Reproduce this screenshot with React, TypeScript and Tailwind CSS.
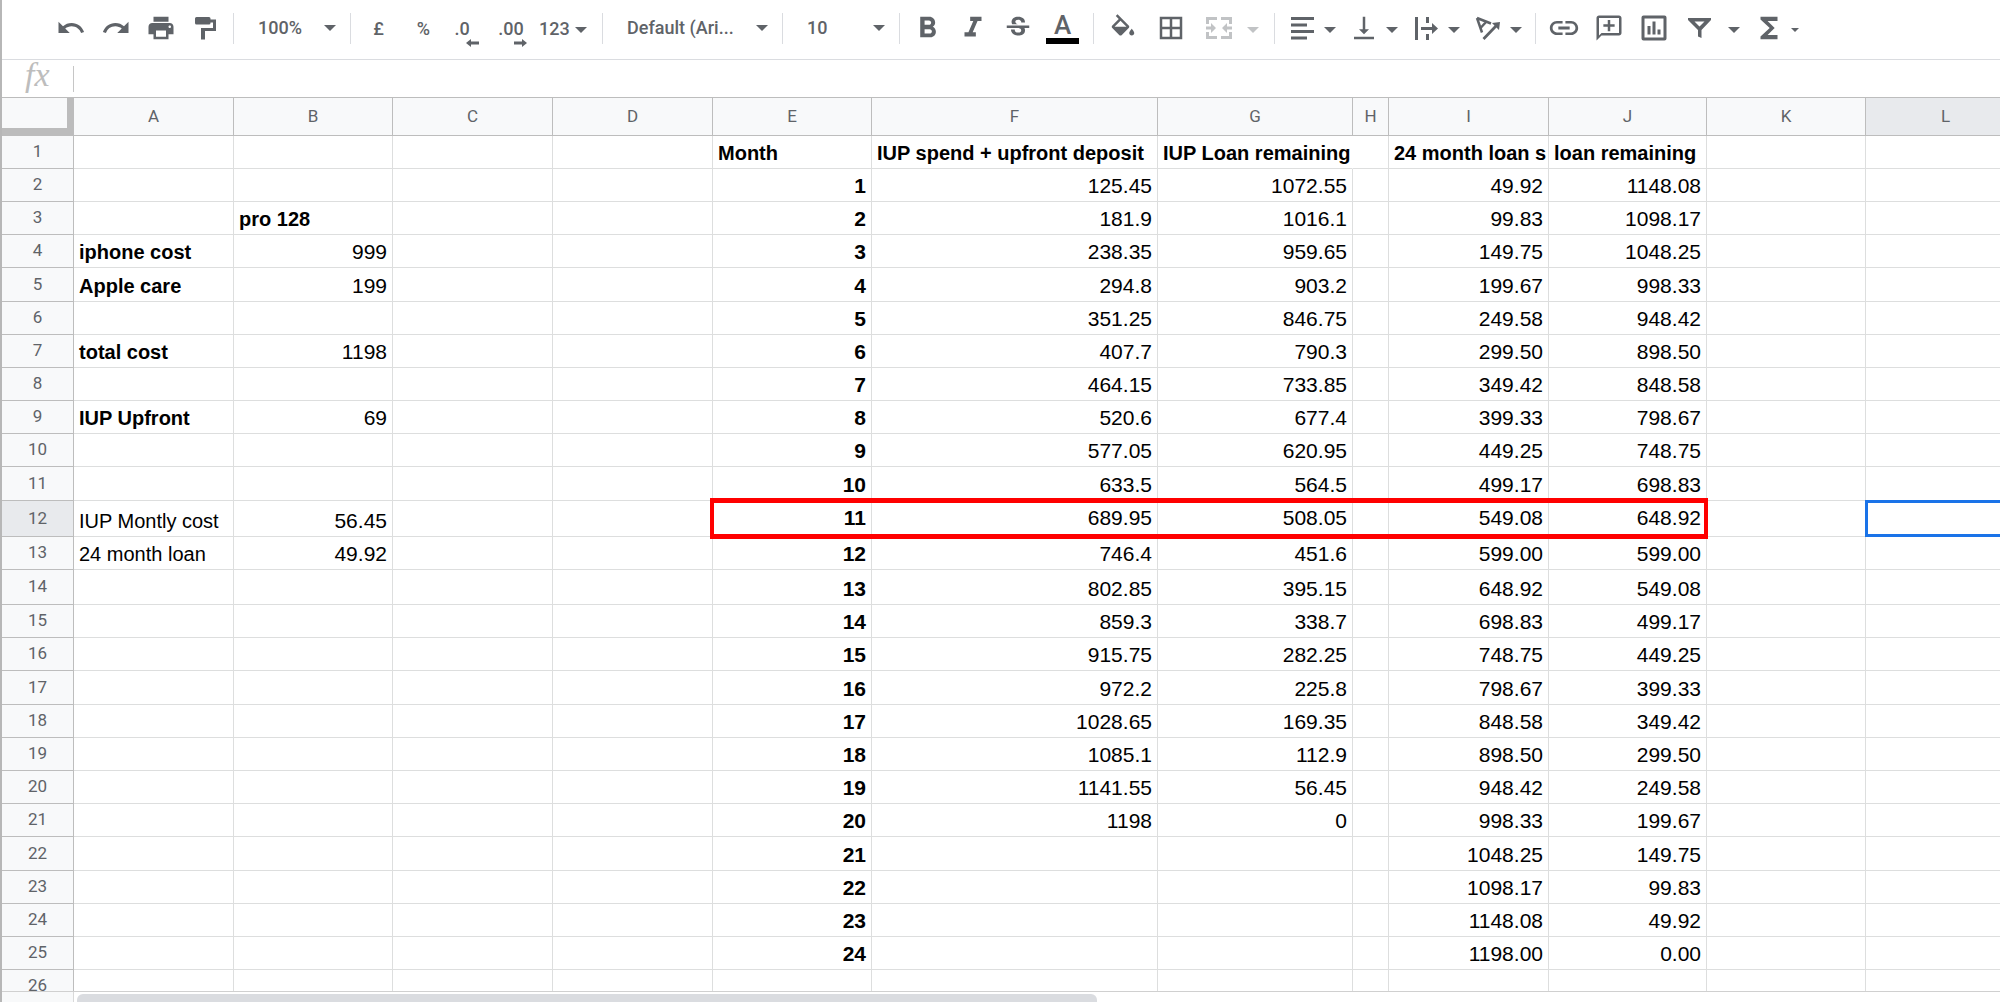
import type { ReactNode } from 'react';
import { clsx } from 'clsx';
import {
    MdBorderAll,
    MdFormatBold,
    MdFormatItalic,
    MdFunctions,
    MdLink,
    MdPrint,
    MdRedo,
    MdStrikethroughS,
    MdUndo,
    MdVerticalAlignBottom,
} from 'react-icons/md';

type Row = { height?: string; cells: Record<string, string> };

const columns = [
    { name: 'A', width: 'w-[160px]' },
    { name: 'B', width: 'w-[159px]' },
    { name: 'C', width: 'w-[160px]' },
    { name: 'D', width: 'w-[160px]' },
    { name: 'E', width: 'w-[159px]' },
    { name: 'F', width: 'w-[286px]' },
    { name: 'G', width: 'w-[195px]' },
    { name: 'H', width: 'w-[36px]' },
    { name: 'I', width: 'w-[160px]' },
    { name: 'J', width: 'w-[158px]' },
    { name: 'K', width: 'w-[159px]' },
    { name: 'L', width: 'w-[160px]' },
];

const rows: Row[] = [
    { cells: { E: 'Month', F: 'IUP spend + upfront deposit', G: 'IUP Loan remaining', I: '24 month loan s', J: 'loan remaining' } },
    { cells: { E: '1', F: '125.45', G: '1072.55', I: '49.92', J: '1148.08' } },
    { cells: { B: 'pro 128', E: '2', F: '181.9', G: '1016.1', I: '99.83', J: '1098.17' } },
    { cells: { A: 'iphone cost', B: '999', E: '3', F: '238.35', G: '959.65', I: '149.75', J: '1048.25' } },
    { height: 'h-[34px]', cells: { A: 'Apple care', B: '199', E: '4', F: '294.8', G: '903.2', I: '199.67', J: '998.33' } },
    { cells: { E: '5', F: '351.25', G: '846.75', I: '249.58', J: '948.42' } },
    { cells: { A: 'total cost', B: '1198', E: '6', F: '407.7', G: '790.3', I: '299.50', J: '898.50' } },
    { cells: { E: '7', F: '464.15', G: '733.85', I: '349.42', J: '848.58' } },
    { cells: { A: 'IUP Upfront', B: '69', E: '8', F: '520.6', G: '677.4', I: '399.33', J: '798.67' } },
    { cells: { E: '9', F: '577.05', G: '620.95', I: '449.25', J: '748.75' } },
    { height: 'h-[34px]', cells: { E: '10', F: '633.5', G: '564.5', I: '499.17', J: '698.83' } },
    { height: 'h-[36px]', cells: { A: 'IUP Montly cost', B: '56.45', E: '11', F: '689.95', G: '508.05', I: '549.08', J: '648.92' } },
    { cells: { A: '24 month loan', B: '49.92', E: '12', F: '746.4', G: '451.6', I: '599.00', J: '599.00' } },
    { height: 'h-[35px]', cells: { E: '13', F: '802.85', G: '395.15', I: '648.92', J: '549.08' } },
    { cells: { E: '14', F: '859.3', G: '338.7', I: '698.83', J: '499.17' } },
    { cells: { E: '15', F: '915.75', G: '282.25', I: '748.75', J: '449.25' } },
    { height: 'h-[34px]', cells: { E: '16', F: '972.2', G: '225.8', I: '798.67', J: '399.33' } },
    { cells: { E: '17', F: '1028.65', G: '169.35', I: '848.58', J: '349.42' } },
    { cells: { E: '18', F: '1085.1', G: '112.9', I: '898.50', J: '299.50' } },
    { cells: { E: '19', F: '1141.55', G: '56.45', I: '948.42', J: '249.58' } },
    { cells: { E: '20', F: '1198', G: '0', I: '998.33', J: '199.67' } },
    { height: 'h-[34px]', cells: { E: '21', I: '1048.25', J: '149.75' } },
    { cells: { E: '22', I: '1098.17', J: '99.83' } },
    { cells: { E: '23', I: '1148.08', J: '49.92' } },
    { cells: { E: '24', I: '1198.00', J: '0.00' } },
    { cells: {} },
];

const ACTIVE_ROW = 12;
const ACTIVE_COL = 'L';
const BOXED = ['E', 'F', 'G', 'H', 'I', 'J'];

const isNumber = (text: string) => /^[\d.]+$/.test(text);

const isBold = (row: number, col: string) =>
    row === 1 || col === 'E' || (col === 'A' && row < 12) || (col === 'B' && row === 3);

const Svg = ({ children, viewBox = '0 0 30 30' }: { children: ReactNode; viewBox?: string }) => (
    <svg viewBox={viewBox} fill="currentColor" className="size-[30px] shrink-0" aria-hidden="true">
        {children}
    </svg>
);

const Caret = ({ className }: { className?: string }) => (
    <svg viewBox="0 0 12 6" fill="currentColor" className={clsx('h-[6px] w-[12px] shrink-0', className)} aria-hidden="true">
        <path d="M0 0h12L6 6z" />
    </svg>
);

const Divider = () => <div className="mx-[5px] h-[31px] w-px shrink-0 bg-[#dadce0]" />;

const Tool = ({ label, className = 'w-[45px]', children }: { label: string; className?: string; children: ReactNode }) => (
    <button type="button" aria-label={label} className={clsx('flex h-full shrink-0 items-center justify-center', className)}>
        {children}
    </button>
);

const DropTool = ({ label, children }: { label: string; children: ReactNode }) => (
    <button type="button" aria-label={label} className="flex h-full w-[62px] shrink-0 items-center gap-[7px] pl-[7px]">
        {children}
        <Caret className="mt-[4px]" />
    </button>
);

const Picker = ({ label, value, className }: { label: string; value: string; className: string }) => (
    <div className={clsx('relative flex h-full shrink-0 items-center', className)}>
        <select aria-label={label} defaultValue={value} className="h-8 w-full appearance-none bg-transparent pb-px pl-[19px] font-medium outline-none">
            <option>{value}</option>
        </select>
        <Caret className="pointer-events-none absolute right-[9px]" />
    </div>
);

const Toolbar = () => (
    <div className="flex h-[60px] shrink-0 items-center overflow-hidden border-b border-[#dadce0] pb-[3px] pl-[46px] font-[Roboto,sans-serif] text-[18px] font-medium text-[#5f6368]">
        <Tool label="Undo"><MdUndo size={30} /></Tool>
        <Tool label="Redo"><MdRedo size={30} /></Tool>
        <Tool label="Print"><MdPrint size={30} /></Tool>
        <Tool label="Paint format">
            <Svg>
                <path d="M5.500 4h12.500a1.500 1.500 0 0 1 1.500 1.500V6.500H25V18H14v8.500h-4V15h12V9.500h-2.500v.5a1.500 1.500 0 0 1-1.500 1.500H5.500A1.500 1.500 0 0 1 4 10V5.500A1.500 1.500 0 0 1 5.500 4z" />
            </Svg>
        </Tool>
        <Divider />
        <Picker label="Zoom" value="100%" className="w-[106px]" />
        <Divider />
        <Tool label="Format as currency">£</Tool>
        <Tool label="Format as percent">%</Tool>
        <Tool label="Decrease decimal places" className="w-11 pr-[12px]">
            <span className="relative">
                .0
                <svg viewBox="0 0 13 8" fill="currentColor" className="absolute -right-[9px] -bottom-[5px] h-[8px] w-[13px]">
                    <path d="M0 4l5-4v2.500h8v3H5V8z" />
                </svg>
            </span>
        </Tool>
        <Tool label="Increase decimal places" className="w-[46px] pr-[4px]">
            <span className="relative">
                .00
                <svg viewBox="0 0 13 8" fill="currentColor" className="absolute -right-[3px] -bottom-[5px] h-[8px] w-[13px]">
                    <path d="M13 4L8 0v2.500H0v3h8V8z" />
                </svg>
            </span>
        </Tool>
        <button type="button" className="flex h-full w-[61px] shrink-0 items-center gap-[5px] pl-[3px]">
            123
            <Caret className="mt-[3px]" />
        </button>
        <Divider />
        <Picker label="Font" value="Default (Ari..." className="w-[169px]" />
        <Divider />
        <Picker label="Font size" value="10" className="w-[106px]" />
        <Divider />
        <div className="flex h-full shrink-0 pr-[3px]">
            <Tool label="Bold"><MdFormatBold size={35} /></Tool>
            <Tool label="Italic"><MdFormatItalic size={34} /></Tool>
            <Tool label="Strikethrough"><MdStrikethroughS size={30} /></Tool>
            <Tool label="Text color">
                <span className="flex flex-col items-center">
                    <span className="text-[26px] leading-[26px]">A</span>
                    <span className="h-[6px] w-[33px] bg-black" />
                </span>
            </Tool>
        </div>
        <Divider />
        <Tool label="Fill color" className="w-12">
            <Svg viewBox="0 -1 24 24">
                <path d="M16.560 8.940L7.620 0 6.210 1.410l2.380 2.380-5.150 5.150c-.59.59-.59 1.540 0 2.120l5.500 5.500c.29.29.68.44 1.060.44s.77-.15 1.060-.44l5.500-5.500c.59-.58.59-1.530 0-2.120zM5.210 10L10 5.210 14.790 10H5.210zM19 11.500s-2 2.170-2 3.500c0 1.100.9 2 2 2s2-.9 2-2c0-1.330-2-3.500-2-3.500z" />
            </Svg>
        </Tool>
        <Tool label="Borders" className="w-12"><MdBorderAll size={30} /></Tool>
        <button type="button" aria-label="Merge cells" disabled className="flex h-full w-[74px] shrink-0 items-center gap-[13px] pl-[9px] text-[#c1c3c5]">
            <Svg>
                <path d="M2 4h11v3H5v4H2zM17 4h11v7h-3V7h-8zM2 19h3v4h8v3H2zM25 19h3v7H17v-3h8zM2 13.500h5V10l5 5-5 5v-3.500H2zM28 13.500h-5V10l-5 5 5 5v-3.500h5z" />
            </Svg>
            <Caret className="mt-[4px]" />
        </button>
        <Divider />
        <div className="flex h-full shrink-0 pr-[2px]">
            <DropTool label="Horizontal align">
                <Svg>
                    <path d="M4 4h23v3H4zM4 10.500h16v3H4zM4 17h23v3H4zM4 23.500h16v3H4z" />
                </Svg>
            </DropTool>
            <DropTool label="Vertical align"><MdVerticalAlignBottom size={30} className="shrink-0" /></DropTool>
            <DropTool label="Text wrapping">
                <Svg>
                    <path d="M4 4h3v23H4zM15 4h3v6h-3zM15 21h3v6h-3zM10 14h11v-4l6 5.500-6 5.500v-4H10z" />
                </Svg>
            </DropTool>
            <DropTool label="Text rotation">
                <Svg>
                    <path d="M27 9l-1 8-2.500-2.500L11.500 27l-2-2 12-12.500L19 10z" />
                    <path d="M4 5l14 5.500M4 5l5 14.500M13.500 8.500l-6 6.500" fill="none" stroke="currentColor" strokeWidth="2.500" />
                </Svg>
            </DropTool>
        </div>
        <Divider />
        <Tool label="Insert link"><MdLink size={34} /></Tool>
        <Tool label="Insert comment">
            <Svg viewBox="0 0 24 24">
                <path d="M20 2H4c-1.100 0-2 .9-2 2v18l4-4h14c1.100 0 2-.9 2-2V4c0-1.100-.9-2-2-2zm0 14H6l-2 2V4h16v12zM11 14.500h2V11h3.500V9H13V5.500h-2V9H7.500v2H11z" />
            </Svg>
        </Tool>
        <Tool label="Insert chart">
            <Svg>
                <path fillRule="evenodd" d="M4.500 2.500h21a2 2 0 0 1 2 2v21a2 2 0 0 1-2 2h-21a2 2 0 0 1-2-2v-21a2 2 0 0 1 2-2zM5.500 5.500v19h19v-19zM8.500 13h3v8.500h-3zM13.500 8.500h3v13h-3zM18.500 16.500h3v5h-3z" />
            </Svg>
        </Tool>
        <Tool label="Create a filter">
            <Svg>
                <path fillRule="evenodd" d="M4 5h23v2L17.500 17v8L14 23.500V17L4 7zM10.500 8.500l5 5 5-5z" />
            </Svg>
        </Tool>
        <Tool label="Filter views" className="w-[25px]"><Caret className="mt-[4px]" /></Tool>
        <Tool label="Functions"><MdFunctions size={34} /></Tool>
        <svg viewBox="0 0 12 6" fill="currentColor" className="mt-[4px] h-[4px] w-[8px] shrink-0" aria-hidden="true">
            <path d="M0 0h12L6 6z" />
        </svg>
    </div>
);

const FormulaBar = () => (
    <div className="flex h-[37px] shrink-0 items-center">
        <label htmlFor="formula" className="w-[71px] shrink-0 pb-2 pl-[23px] font-['Liberation_Serif',serif] text-[34px] leading-[30px] text-[#bdbdbd] italic">
            fx
        </label>
        <div className="h-[26px] w-px bg-[#c6c6c6]" />
        <input id="formula" type="text" className="h-full flex-1 px-2 outline-none" />
    </div>
);

const Cell = ({ row, col, text }: { row: number; col: string; text: string }) => {
    const boxed = row === ACTIVE_ROW && BOXED.includes(col);
    return (
        <td
            className={clsx(
                'relative border-r border-b border-[#dddede] px-[5px] align-bottom',
                isNumber(text) ? 'text-right text-[21px]' : 'text-left text-[20px]',
                isBold(row, col) && 'font-bold',
                boxed ? 'pb-[3px]' : 'pb-0',
                // long header text runs on into the empty cell beside it
                row === 1 && col === 'G' ? 'border-r-transparent' : 'overflow-hidden',
                row === ACTIVE_ROW && (col === 'E' || col === ACTIVE_COL) && 'overflow-visible',
            )}
        >
            <span className="block leading-[30px] whitespace-nowrap">{text}</span>
            {row === ACTIVE_ROW && col === 'E' && (
                <span className="pointer-events-none absolute -top-[3px] -left-[3px] z-10 h-[41px] w-[998px] border-[4px] border-y-[5px] border-[#ff0000]" />
            )}
            {row === ACTIVE_ROW && col === ACTIVE_COL && (
                <span className="pointer-events-none absolute -top-px -right-px -left-px z-10 h-[37px] border-[3px] border-[#1a73e8]" />
            )}
        </td>
    );
};

const Sheet = () => (
    <div className="min-h-0 flex-1 overflow-hidden">
        <table className="w-full table-fixed border-separate border-spacing-0 font-['Liberation_Sans',Arial,sans-serif] text-black">
            <colgroup>
                <col className="w-[72px]" />
                {columns.map((col) => (
                    <col key={col.name} className={col.width} />
                ))}
            </colgroup>
            <thead className="font-[Roboto,sans-serif] text-[17px] text-[#5f6368]">
                <tr className="h-[39px]">
                    <td className="border-t border-r-[7px] border-b-[8px] border-[#bcbcbc] bg-[#f8f9fa]" />
                    {columns.map((col) => (
                        <th
                            key={col.name}
                            scope="col"
                            className={clsx(
                                'border-y border-r border-[#bdbdbd] p-0 font-normal',
                                col.name === ACTIVE_COL ? 'bg-[#e8eaed]' : 'bg-[#f8f9fa]',
                            )}
                        >
                            {col.name}
                        </th>
                    ))}
                </tr>
            </thead>
            <tbody>
                {rows.map((row, i) => (
                    <tr key={i} className={row.height ?? 'h-[33px]'}>
                        <th
                            scope="row"
                            className={clsx(
                                'border-r border-b border-[#bdbdbd] px-0 pt-0 pb-[2px] align-middle font-[Roboto,sans-serif] text-[17px] leading-[18px] font-normal text-[#5f6368]',
                                i + 1 === ACTIVE_ROW ? 'bg-[#e8eaed]' : 'bg-[#f8f9fa]',
                            )}
                        >
                            {i + 1}
                        </th>
                        {columns.map((col) => (
                            <Cell key={col.name} row={i + 1} col={col.name} text={row.cells[col.name] ?? ''} />
                        ))}
                    </tr>
                ))}
            </tbody>
        </table>
    </div>
);

const ScrollBar = () => (
    <div className="flex h-[11px] shrink-0 border-t border-[#d0d0d0] bg-white">
        <div className="w-[72px] border-r border-[#d9d9d9] bg-[#f8f9fa]" />
        <div className="mt-[2px] ml-[3px] w-[1020px] rounded-t-[6px] bg-[#dadce0]" />
    </div>
);

export default function App() {
    return (
        <main className="flex h-screen flex-col overflow-hidden border-l-2 border-[#b7b7b7] bg-white">
            <Toolbar />
            <FormulaBar />
            <Sheet />
            <ScrollBar />
        </main>
    );
}
